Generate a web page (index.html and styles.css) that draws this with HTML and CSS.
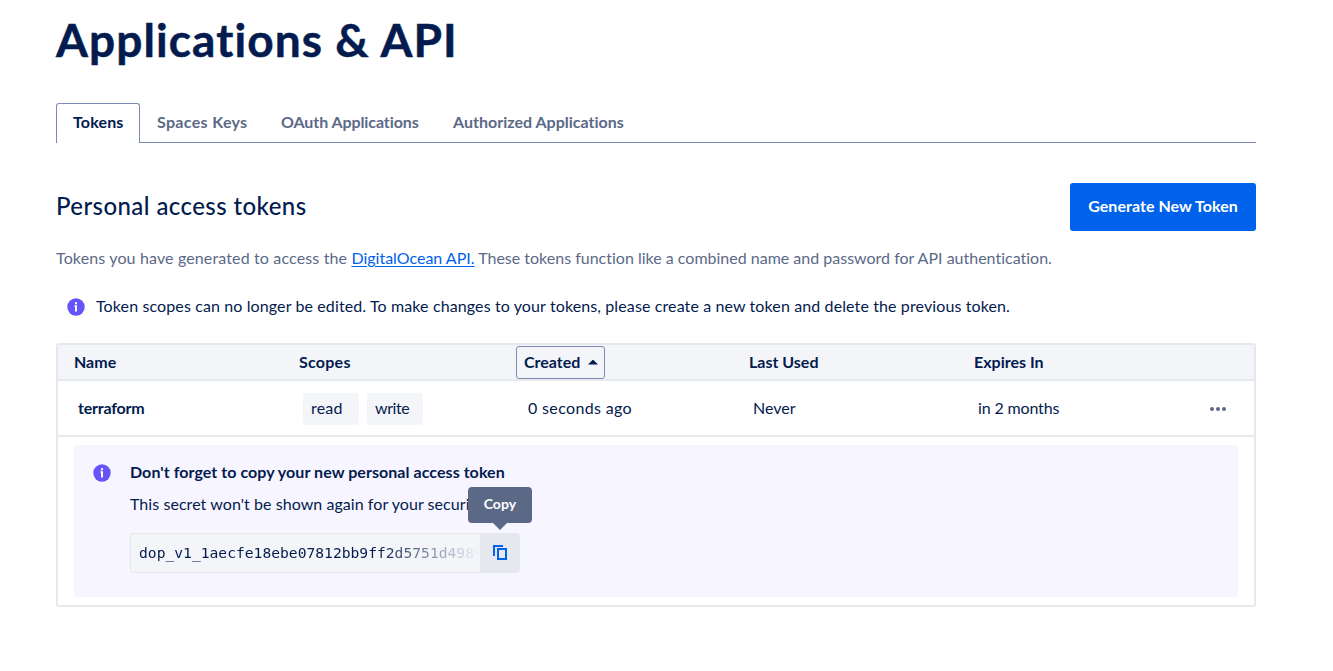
FILE: index.html
```html
<!DOCTYPE html>
<html lang="en">
<head>
<meta charset="utf-8">
<title>Applications &amp; API</title>
<link rel="stylesheet" href="styles.css">
</head>
<body>
<main class="page">
  <h1 class="page-title">Applications &amp; API</h1>
  <nav class="tabs">
    <a class="tab tab-active">Tokens</a>
    <a class="tab tab-spaces">Spaces Keys</a>
    <a class="tab tab-oauth">OAuth Applications</a>
    <a class="tab tab-authorized">Authorized Applications</a>
  </nav>
  <header class="section-head">
    <h2 class="section-title">Personal access tokens</h2>
    <button class="primary-button">Generate New Token</button>
  </header>
  <p class="description"><span class="description-lead">Tokens you have generated to access the </span><a class="link">DigitalOcean API.</a><span> These tokens function like a combined name and password for API authentication.</span></p>
  <div class="notice">
    <svg class="info-icon" viewBox="0 0 18 18"><circle cx="9" cy="9" r="8.7"/><path d="M8 4.3h2v2H8zM7.3 7.3H10v6.2H8V8.6h-.7z"/></svg>
    <span class="notice-text">Token scopes can no longer be edited. To make changes to your tokens, please create a new token and delete the previous token.</span>
  </div>
  <section class="table">
    <div class="row row-head">
      <div>Name</div>
      <div class="scopes">Scopes</div>
      <div><button class="sort"><span>Created</span><i class="caret"></i></button></div>
      <div>Last Used</div>
      <div>Expires In</div>
    </div>
    <div class="row row-body">
      <div class="token-name">terraform</div>
      <div class="tags"><span class="tag tag-read">read</span><span class="tag tag-write">write</span></div>
      <div class="created-ago">0 seconds ago</div>
      <div>Never</div>
      <div class="expires"><span>in 2 months</span><svg class="more" viewBox="0 0 16 4"><circle cx="2" cy="2" r="2"/><circle cx="8" cy="2" r="2"/><circle cx="14" cy="2" r="2"/></svg></div>
    </div>
    <div class="detail">
      <div class="callout">
        <svg class="info-icon" viewBox="0 0 18 18"><circle cx="9" cy="9" r="8.7"/><path d="M8 4.3h2v2H8zM7.3 7.3H10v6.2H8V8.6h-.7z"/></svg>
        <div class="callout-body">
          <strong class="callout-title">Don't forget to copy your new personal access token</strong>
          <div class="callout-text">This secret won't be shown again for your security.</div>
          <div class="secret">
            <code class="secret-value">dop_v1_1aecfe18ebe07812bb9ff2d5751d4989</code>
            <button class="copy-button" aria-label="Copy"><svg class="copy-icon" viewBox="0 0 14 16"><path d="M1 11V1h9M5 4h8v10H5z"/></svg></button>
            <div class="tooltip">Copy</div>
          </div>
        </div>
      </div>
    </div>
  </section>
</main>
</body>
</html>
```

FILE: styles.css
```css
* { box-sizing: border-box; }
body {
  margin: 0;
  background: #fff;
  color: #031b4e;
  font: 16px/24px Lato, "Open Sans", sans-serif;
  font-variant-ligatures: none;
  overflow: hidden;
}
button { font: inherit; font-variant-ligatures: none; color: inherit; border: 0; padding: 0; margin: 0; }
.page { width: 1200px; margin-left: 56px; white-space: nowrap; }

.page-title { margin: 0; padding-top: 12px; height: 103px; font-size: 46px; line-height: 56px; font-weight: 700; letter-spacing: 1.1px; -webkit-text-stroke: .5px #031b4e; }

.tabs { display: flex; height: 40px; border-bottom: 1px solid #7c8bb4; font-weight: 700; color: #5b6987; }
.tab { padding: 7px 17px; height: 40px; }
.tab-active { width: 84px; padding: 6px 16px; border: 1px solid #7c8bb4; border-bottom: 0; border-radius: 3px 3px 0 0; background: #fff; color: #031b4e; letter-spacing: .15px; }
.tab-spaces { width: 124px; letter-spacing: .33px; }
.tab-oauth { width: 172px; letter-spacing: -.08px; }
.tab-authorized { letter-spacing: .01px; }

.section-head { display: flex; align-items: center; justify-content: space-between; margin-top: 40px; height: 48px; }
.section-title { margin: 0; padding-bottom: 2px; font-size: 24px; line-height: 32px; font-weight: 500; letter-spacing: .42px; }
.primary-button { width: 186px; height: 48px; padding-bottom: 2px; border-radius: 3px; background: #0061eb; color: #fff; font-weight: 700; letter-spacing: .05px; }

.description { margin: 15px 0 0; color: #5b6987; white-space: pre; letter-spacing: 0; }
.description-lead { letter-spacing: .14px; }
.link { color: #0061eb; text-decoration: underline; text-underline-offset: 2px; }
.notice { display: flex; align-items: center; gap: 11px; margin-top: 25px; padding-left: 11px; height: 24px; }
.notice-text { padding-bottom: 2px; letter-spacing: .115px; }
.info-icon { width: 18px; height: 18px; flex: none; fill: #6554f8; }
.info-icon path { fill: #fff; }

.table { margin-top: 24px; height: 264px; border: 2px solid #e5e8ed; border-radius: 3px; }
.row { display: grid; grid-template-columns: repeat(4, 225px) 1fr; align-items: center; padding-left: 16px; border-bottom: 2px solid #e5e8ed; }
.row-head { height: 36px; background: #f3f5f9; font-weight: 700; }
.scopes { letter-spacing: .25px; }
.row-body { height: 56px; padding: 2px 0 0 20px; }
.row-body > div { height: 32px; line-height: 30px; }
.sort { display: flex; align-items: center; width: 89px; height: 33px; margin-left: -8px; padding-left: 7px; border: 1px solid #7c8bb4; border-radius: 3px; background: none; font-weight: 700; }
.sort span { width: 64px; text-align: left; }
.caret { width: 10px; height: 5px; background: #031b4e; clip-path: polygon(50% 0, 100% 100%, 0 100%); }
.token-name { font-weight: 700; letter-spacing: -.2px; }
.tags { display: flex; gap: 8px; }
.tag { width: 56px; height: 32px; padding: 0 8px; border-radius: 3px; background: #f3f5f9; }
.tag-read { letter-spacing: .2px; }
.tag-write { letter-spacing: -.4px; }
.created-ago { letter-spacing: .35px; }
.expires { display: flex; align-items: center; justify-content: space-between; padding-right: 28px; letter-spacing: -.15px; }
.expires span { padding-bottom: 2px; }
.more { width: 16px; height: 4px; fill: #5b6987; }

.detail { padding: 8px 16px; }
.callout { display: flex; gap: 19px; height: 152px; padding: 15px 19px; border-radius: 3px; background: #f7f5ff; }
.callout .info-icon { margin-top: 4px; }
.callout-body { width: 390px; }
.callout-title, .callout-text { display: block; height: 24px; letter-spacing: .06px; }
.callout-text { margin-top: 8px; }
.secret { display: flex; position: relative; width: 390px; height: 40px; margin-top: 17px; border: 1px solid #e5e8ed; border-radius: 3px; background: #f3f5f9; }
.secret-value { width: 349px; padding: 7px 0 0 8px; overflow: hidden; font: 14.65px/24px "DejaVu Sans Mono", monospace; background: linear-gradient(90deg, #031b4e 70%, #f3f5f9 100%); -webkit-background-clip: text; background-clip: text; color: transparent; }
.copy-button { display: flex; align-items: center; justify-content: center; width: 39px; height: 38px; background: #e5e8ed; }
.copy-icon { width: 14px; height: 16px; fill: none; stroke: #0061eb; stroke-width: 2; }
.tooltip { position: absolute; left: 337px; top: -47px; width: 64px; height: 36px; border-radius: 4px; background: #5b6987; color: #fff; font-size: 14px; line-height: 34px; font-weight: 700; text-align: center; letter-spacing: .1px; }
.tooltip::after { content: ""; position: absolute; left: 25px; top: 36px; width: 14px; height: 7px; background: #5b6987; clip-path: polygon(0 0, 100% 0, 50% 100%); }
```
